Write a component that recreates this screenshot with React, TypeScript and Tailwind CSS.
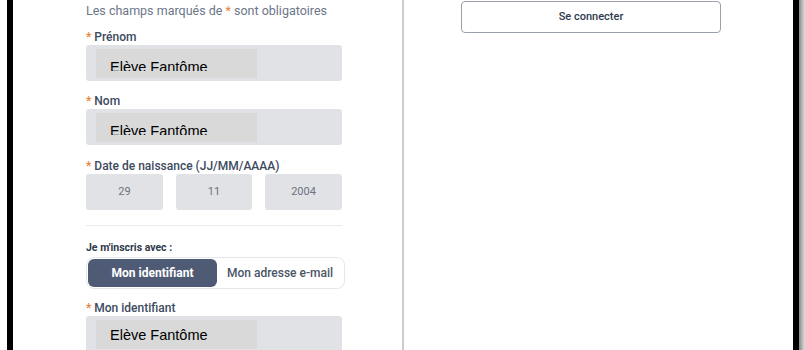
import React from 'react'

const font = { fontFamily: 'Roboto, "Noto Sans", sans-serif' }
const maskFont = { fontFamily: '"Liberation Sans", Arial, sans-serif' }

function Label({ text }: { text: string }) {
  return (
    <div className="text-[12px] leading-[14px] font-medium text-[#3d4a5e]">
      <span className="text-[#e8833a]">* </span>
      {text}
    </div>
  )
}

// grey box that hides the real value in the screenshot
function Masked({ clipped = true }: { clipped?: boolean }) {
  return (
    <div className="absolute left-[10px] top-[4px] w-[161px] h-[29px] bg-[#d9d9d9]">
      {clipped ? (
        <div className="h-[22px] overflow-hidden pl-[14px] pt-[10px]">
          <div className="text-[14.5px] leading-[17px] text-black" style={maskFont}>
            Elève Fantôme
          </div>
        </div>
      ) : (
        <div className="pl-[14px] pt-[7px] text-[14.5px] leading-[17px] text-black" style={maskFont}>
          Elève Fantôme
        </div>
      )}
    </div>
  )
}

function TextInput({ clipped = true }: { clipped?: boolean }) {
  return (
    <div className="relative h-[36px] w-full rounded-[3px] bg-[#e1e2e6]">
      <Masked clipped={clipped} />
    </div>
  )
}

function DateBox({ value, w }: { value: string; w: string }) {
  return (
    <div className={`${w} h-[36px] rounded-[3px] bg-[#e1e2e6] flex items-center justify-center text-[11px] text-[#6b7280]`}>
      {value}
    </div>
  )
}

export default function App() {
  return (
    <div className="flex h-[350px] w-[805px] overflow-hidden bg-white" style={font}>
      <div className="w-[7px] bg-white" />
      <div className="w-[6px] bg-black" />

      {/* left column: form */}
      <div className="w-[389px] pl-[73px] pt-[3px]">
        <div className="w-[256px]">
          <p className="text-[12.5px] leading-[15px] text-[#6b7688]">
            Les champs marqués de <span className="text-[#e8833a]">*</span> sont obligatoires
          </p>

          <div className="mt-[12px]">
            <Label text="Prénom" />
          </div>
          <div className="mt-[1px]">
            <TextInput />
          </div>

          <div className="mt-[13px]">
            <Label text="Nom" />
          </div>
          <div className="mt-[1px]">
            <TextInput />
          </div>

          <div className="mt-[14px]">
            <Label text="Date de naissance (JJ/MM/AAAA)" />
          </div>
          <div className="mt-[1px] flex justify-between">
            <DateBox value="29" w="w-[77px]" />
            <DateBox value="11" w="w-[76px]" />
            <DateBox value="2004" w="w-[77px]" />
          </div>

          <div className="mt-[15px] h-px bg-[#e8eaed]" />

          <div className="mt-[16px] text-[10.5px] leading-[12px] font-bold text-[#2f3a4c]">Je m'inscris avec :</div>

          <div className="mt-[3px] flex h-[32px] w-[259px] items-center rounded-[8px] border border-[#e5e7eb] p-[1px]">
            <div className="flex h-[28px] w-[129px] items-center justify-center rounded-[6px] bg-[#4f5b75] text-[12px] font-bold text-white">
              Mon identifiant
            </div>
            <div className="flex flex-1 items-center justify-center text-[12px] font-medium text-[#4b5566]">
              Mon adresse e-mail
            </div>
          </div>

          <div className="mt-[12px]">
            <Label text="Mon identifiant" />
          </div>
          <div className="mt-[1px]">
            <TextInput clipped={false} />
          </div>
        </div>
      </div>

      <div className="w-[2px] bg-[#c9cdd3]" />

      {/* right column */}
      <div className="w-[389px] pt-px pl-[57px]">
        <button className="h-[32px] w-[260px] rounded-[4px] border-[1.5px] border-[#9aa1ad] bg-white text-[11px] font-medium text-[#2f3a4c]">
          Se connecter
        </button>
      </div>

      <div className="w-[6px] bg-black" />
      <div className="w-[6px] bg-gradient-to-r from-[#8a8a8a] to-[#e0e0e0]" />
    </div>
  )
}
